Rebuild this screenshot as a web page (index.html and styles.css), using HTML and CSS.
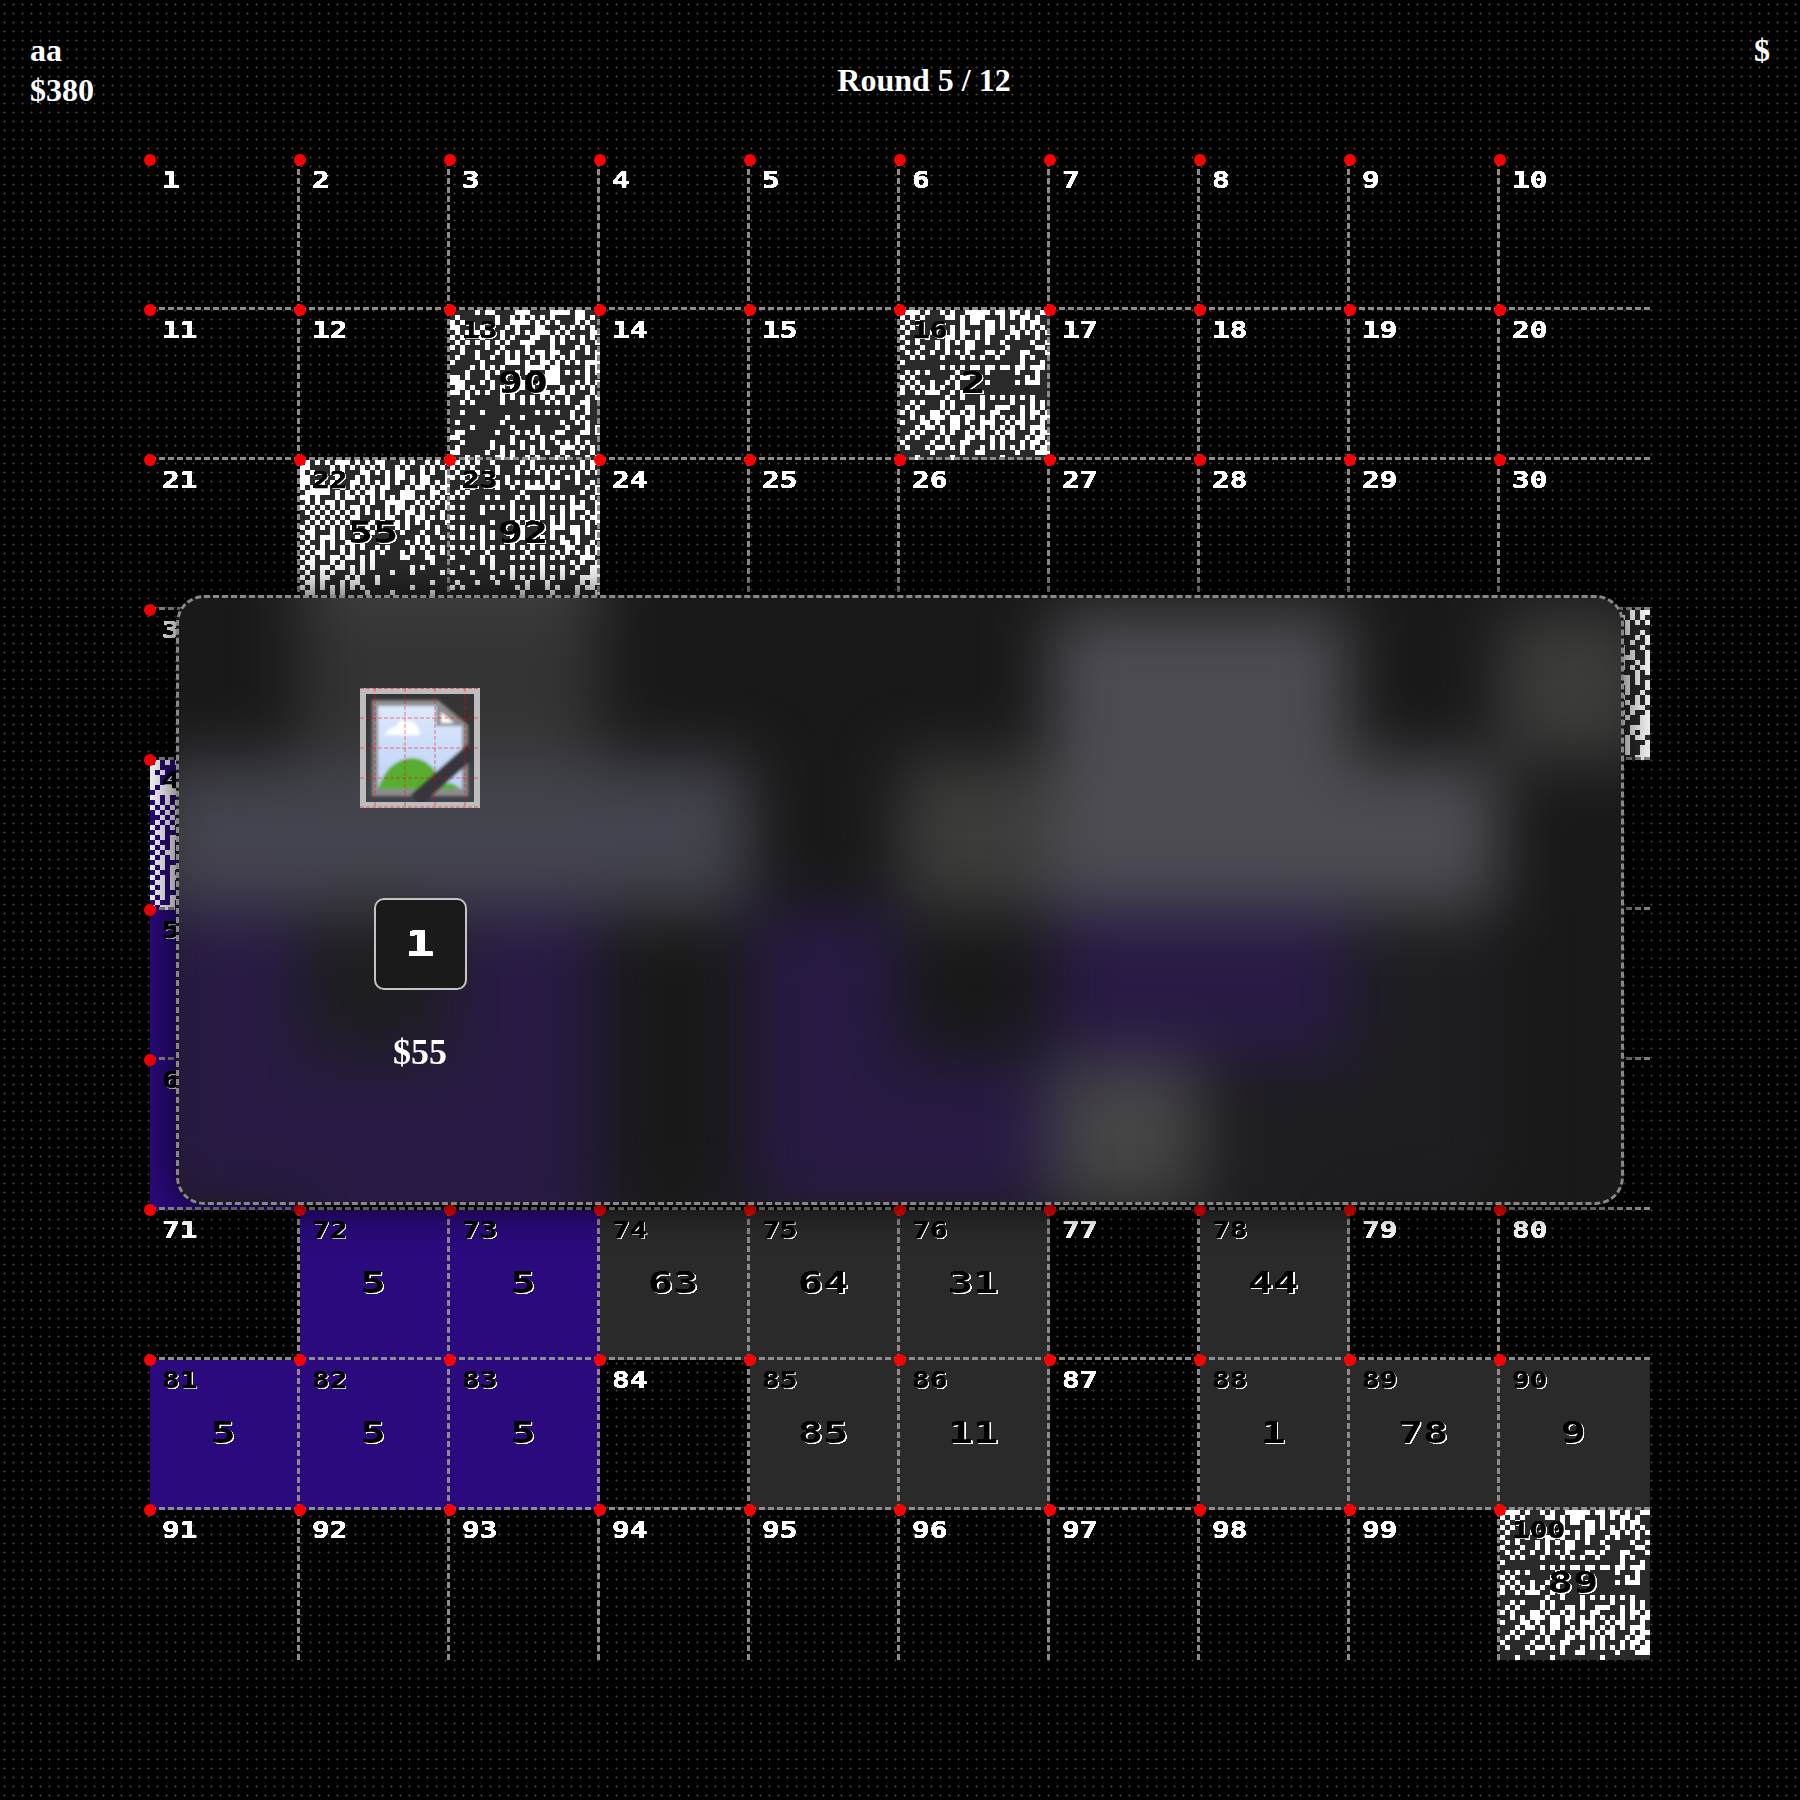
FILE: index.html
```html
<!DOCTYPE html>
<html lang="en">
<head>
<meta charset="utf-8">
<title>Round 5 / 12</title>
<link rel="stylesheet" href="styles.css">
</head>
<body>
<svg class="defs" width="0" height="0" aria-hidden="true"><filter id="crisp" x="-5%" y="-5%" width="110%" height="110%" color-interpolation-filters="sRGB"><feComponentTransfer><feFuncA type="linear" slope="4" intercept="-1.4"/></feComponentTransfer></filter></svg>
<header class="topbar">
  <div class="player"><div>aa</div><div>$380</div></div>
  <div class="round">Round 5 / 12</div>
  <div class="cash">$</div>
</header>
<main class="board">
<div class="cell"><span class="num">1</span></div>
<div class="cell"><span class="num">2</span></div>
<div class="cell"><span class="num">3</span></div>
<div class="cell"><span class="num">4</span></div>
<div class="cell"><span class="num">5</span></div>
<div class="cell"><span class="num">6</span></div>
<div class="cell"><span class="num">7</span></div>
<div class="cell"><span class="num">8</span></div>
<div class="cell"><span class="num">9</span></div>
<div class="cell"><span class="num">10</span></div>
<div class="cell"><span class="num">11</span></div>
<div class="cell"><span class="num">12</span></div>
<div class="cell grey"><canvas class="noise" width="30" height="30" data-art="b"></canvas><span class="num">13</span><span class="val">90</span></div>
<div class="cell"><span class="num">14</span></div>
<div class="cell"><span class="num">15</span></div>
<div class="cell grey"><canvas class="noise" width="30" height="30" data-art="a"></canvas><span class="num">16</span><span class="val">2</span></div>
<div class="cell"><span class="num">17</span></div>
<div class="cell"><span class="num">18</span></div>
<div class="cell"><span class="num">19</span></div>
<div class="cell"><span class="num">20</span></div>
<div class="cell"><span class="num">21</span></div>
<div class="cell grey"><canvas class="noise" width="30" height="30" data-art="c"></canvas><span class="num">22</span><span class="val">55</span></div>
<div class="cell grey"><canvas class="noise" width="30" height="30" data-art="d"></canvas><span class="num">23</span><span class="val">92</span></div>
<div class="cell"><span class="num">24</span></div>
<div class="cell"><span class="num">25</span></div>
<div class="cell"><span class="num">26</span></div>
<div class="cell"><span class="num">27</span></div>
<div class="cell"><span class="num">28</span></div>
<div class="cell"><span class="num">29</span></div>
<div class="cell"><span class="num">30</span></div>
<div class="cell"><span class="num">31</span></div>
<div class="cell"><span class="num">32</span></div>
<div class="cell"><span class="num">33</span></div>
<div class="cell"><span class="num">34</span></div>
<div class="cell"><span class="num">35</span></div>
<div class="cell"><span class="num">36</span></div>
<div class="cell"><span class="num">37</span></div>
<div class="cell"><span class="num">38</span></div>
<div class="cell"><span class="num">39</span></div>
<div class="cell grey"><canvas class="noise" width="30" height="30" data-art="d"></canvas><span class="num">40</span></div>
<div class="cell purple"><canvas class="noise" width="30" height="30" data-art="c"></canvas><span class="num">41</span></div>
<div class="cell"><span class="num">42</span></div>
<div class="cell"><span class="num">43</span></div>
<div class="cell"><span class="num">44</span></div>
<div class="cell"><span class="num">45</span></div>
<div class="cell"><span class="num">46</span></div>
<div class="cell"><span class="num">47</span></div>
<div class="cell"><span class="num">48</span></div>
<div class="cell"><span class="num">49</span></div>
<div class="cell"><span class="num">50</span></div>
<div class="cell purple"><span class="num">51</span></div>
<div class="cell"><span class="num">52</span></div>
<div class="cell"><span class="num">53</span></div>
<div class="cell"><span class="num">54</span></div>
<div class="cell"><span class="num">55</span></div>
<div class="cell"><span class="num">56</span></div>
<div class="cell"><span class="num">57</span></div>
<div class="cell"><span class="num">58</span></div>
<div class="cell"><span class="num">59</span></div>
<div class="cell"><span class="num">60</span></div>
<div class="cell purple"><span class="num">61</span></div>
<div class="cell"><span class="num">62</span></div>
<div class="cell"><span class="num">63</span></div>
<div class="cell"><span class="num">64</span></div>
<div class="cell"><span class="num">65</span></div>
<div class="cell"><span class="num">66</span></div>
<div class="cell"><span class="num">67</span></div>
<div class="cell"><span class="num">68</span></div>
<div class="cell"><span class="num">69</span></div>
<div class="cell"><span class="num">70</span></div>
<div class="cell"><span class="num">71</span></div>
<div class="cell purple"><span class="num">72</span><span class="val">5</span></div>
<div class="cell purple"><span class="num">73</span><span class="val">5</span></div>
<div class="cell grey"><span class="num">74</span><span class="val">63</span></div>
<div class="cell grey"><span class="num">75</span><span class="val">64</span></div>
<div class="cell grey"><span class="num">76</span><span class="val">31</span></div>
<div class="cell"><span class="num">77</span></div>
<div class="cell grey"><span class="num">78</span><span class="val">44</span></div>
<div class="cell"><span class="num">79</span></div>
<div class="cell"><span class="num">80</span></div>
<div class="cell purple"><span class="num">81</span><span class="val">5</span></div>
<div class="cell purple"><span class="num">82</span><span class="val">5</span></div>
<div class="cell purple"><span class="num">83</span><span class="val">5</span></div>
<div class="cell"><span class="num">84</span></div>
<div class="cell grey"><span class="num">85</span><span class="val">85</span></div>
<div class="cell grey"><span class="num">86</span><span class="val">11</span></div>
<div class="cell"><span class="num">87</span></div>
<div class="cell grey"><span class="num">88</span><span class="val">1</span></div>
<div class="cell grey"><span class="num">89</span><span class="val">78</span></div>
<div class="cell grey"><span class="num">90</span><span class="val">9</span></div>
<div class="cell"><span class="num">91</span></div>
<div class="cell"><span class="num">92</span></div>
<div class="cell"><span class="num">93</span></div>
<div class="cell"><span class="num">94</span></div>
<div class="cell"><span class="num">95</span></div>
<div class="cell"><span class="num">96</span></div>
<div class="cell"><span class="num">97</span></div>
<div class="cell"><span class="num">98</span></div>
<div class="cell"><span class="num">99</span></div>
<div class="cell grey"><canvas class="noise" width="30" height="30" data-art="a"></canvas><span class="num">100</span><span class="val">89</span></div>
</main>
<section class="modal">
  <div class="veil" aria-hidden="true">
    <i></i><i class="bright"></i><i class="bright"></i><i></i><i></i><i></i><i></i><i></i><i></i><i></i>
    <i></i><i class="mist"></i><i class="mist"></i><i></i><i></i><i></i><i class="pale"></i><i class="pale"></i><i></i><i class="stone"></i>
    <i class="dusk"></i><i class="dusk"></i><i class="dusk"></i><i class="dusk"></i><i></i><i class="stone"></i><i class="pale"></i><i class="pale"></i><i class="pale"></i><i></i>
    <i class="plum"></i><i class="soot"></i><i class="plum"></i><i></i><i class="plum"></i><i></i><i class="plum"></i><i class="plum"></i><i class="soot"></i><i></i>
    <i class="plum"></i><i class="plum"></i><i class="plum"></i><i></i><i class="plum"></i><i class="plum"></i><i class="ash"></i><i class="soot"></i><i class="soot"></i><i></i>
    <i></i><i class="plum"></i><i class="plum"></i><i class="soot"></i><i class="soot"></i><i class="soot"></i><i></i><i class="soot"></i><i></i><i></i>
  </div>
  <div class="offer">
    <svg class="thumb" viewBox="0 0 120 120" width="120" height="120" aria-hidden="true">
      <defs>
        <filter id="soft" x="-10%" y="-10%" width="120%" height="120%"><feGaussianBlur stdDeviation="1.7"/></filter>
        <linearGradient id="sky" x1="0" y1="0" x2="0" y2="1"><stop offset="0" stop-color="#dde9fb"/><stop offset="1" stop-color="#bcd2f7"/></linearGradient>
      </defs>
      <g filter="url(#soft)">
        <path d="M12 12H78L108 37V108H12Z" fill="#8c8c8c"/>
        <path d="M18 18H76V38H102V101H18Z" fill="url(#sky)"/>
        <path d="M81 24L94 35H81Z" fill="#fff"/>
        <path d="M25 47Q28 39 36 39Q40 29 48 33Q58 33 60 47Z" fill="#fff"/>
        <path d="M18 101Q28 70 54 70Q74 72 84 101Z" fill="#58ad2e"/>
        <path d="M78 101Q90 90 100 101Z" fill="#58ad2e"/>
        <path d="M112 62L56 112" stroke="#34343a" stroke-width="15" fill="none"/>
      </g>
      <rect x="3" y="3" width="114" height="114" fill="none" stroke="#bdbdbd" stroke-width="6"/>
      <path class="mesh" d="M15 0V120M45 0V120M75 0V120M105 0V120M0 .5H120M0 30H120M0 60H120M0 90H120M0 119H120"/>
    </svg>
    <button class="pick" type="button"><span class="pick-num">1</span></button>
    <div class="price">$55</div>
  </div>
</section>
<script src="script.js"></script>
</body>
</html>
```
FILE: styles.css
```css
* { box-sizing: border-box; }
html, body { margin: 0; height: 100%; }
body {
  min-height: 1800px;
  background-color: #000;
  background-image: radial-gradient(circle at 4.5px 4.5px, #454545 0 .6px, #262626 .6px 1.2px, transparent 1.2px);
  background-size: 9px 9px;
  color: #fff;
  font-family: "Liberation Serif", serif;
  font-weight: 700;
  font-size: 32px;
  line-height: 40px;
}
.defs { position: absolute; }
.topbar {
  display: flex;
  justify-content: space-between;
  align-items: flex-start;
  height: 160px;
  padding: 30px;
}
.round { margin-top: 30px; }
.board {
  display: grid;
  grid-template-columns: repeat(10, 150px);
  grid-auto-rows: 150px;
  width: 1500px;
  margin-left: 150px;
}
.cell {
  position: relative;
  display: grid;
  place-items: center;
  padding: 0 3px 3px 0;
}
.cell::before {
  content: "";
  position: absolute;
  left: -6px;
  top: -6px;
  width: 12px;
  height: 12px;
  border-radius: 50%;
  background: #f00;
  z-index: 3;
}
.cell::after {
  content: "";
  position: absolute;
  inset: 0;
  border-right: 3px dashed #8c8c8c;
  border-bottom: 3px dashed #8c8c8c;
  z-index: 2;
}
.cell:nth-child(10n)::after { border-right: 0; }
.cell:nth-child(n+91)::after { border-bottom: 0; }
.grey { background: #2a2a2a; }
.purple { background: #2a0a7c; }
.noise {
  position: absolute;
  left: 0;
  top: 0;
  width: 150px;
  height: 150px;
  image-rendering: pixelated;
}
.num, .val, .pick-num {
  display: inline-block;
  position: relative;
  z-index: 1;
  font-family: "DejaVu Sans Mono", monospace;
  font-weight: 700;
  filter: url(#crisp);
}
.num, .val { grid-area: 1 / 1; }
.num {
  justify-self: start;
  align-self: start;
  margin: 6px 0 0 12px;
  font-size: 23px;
  line-height: 28px;
  transform: scaleX(1.28);
  transform-origin: left center;
  -webkit-text-stroke: .4px currentColor;
}
.val {
  font-size: 30px;
  line-height: 34px;
  margin-top: -2px;
  transform: scaleX(1.4);
}
.grey .num, .grey .val, .purple .num, .purple .val {
  color: #000;
  text-shadow: 1px 1px 0 #fff;
}
.modal {
  position: fixed;
  inset: 595px 176px;
  z-index: 10;
  overflow: hidden;
  padding: 90px 0 0 181px;
  border: 3px dashed #888;
  border-radius: 28px;
  background: #191919;
  box-shadow: 0 0 40px rgba(0, 0, 0, .8);
}
.veil {
  position: absolute;
  left: -29px;
  top: -138px;
  display: grid;
  grid-template-columns: repeat(10, 150px);
  grid-auto-rows: 150px;
  filter: blur(32px);
}
.veil .bright { background: #3e3e3e; }
.veil .mist { background: #343434; }
.veil .pale { background: #4c4c52; }
.veil .stone { background: #3c3c3b; }
.veil .dusk { background: #44444e; }
.veil .plum { background: #281a44; }
.veil .soot { background: #1e1d20; }
.veil .ash { background: #454545; }
.offer {
  position: relative;
  display: flex;
  flex-direction: column;
  align-items: center;
  width: 120px;
}
.thumb { display: block; }
.mesh { fill: none; stroke: rgba(255, 0, 0, .5); stroke-width: 1; stroke-dasharray: 4 2; }
.pick {
  width: 93px;
  height: 92px;
  margin-top: 90px;
  padding: 0;
  border: 2px solid #c4c4c4;
  border-radius: 10px;
  background: #1a1a1a;
  color: #fff;
  font-size: 36px;
  line-height: 40px;
}
.pick-num { transform: scaleX(1.35); -webkit-text-stroke: .5px currentColor; }
.price {
  margin-top: 40px;
  font-size: 36px;
  line-height: 44px;
}
```
FILE: script.js
```js
var ART = {
  a: [
    ".###.##.#.#.#########.##.#..##",
    "#.#.#....##.#.####..#.#.##.#.#",
    ".#.#......#.#.##.##.#.#.#.###.",
    "#.#.......#.#..#.##.#.#.#.#.#.",
    ".##.#.#...#.##.#.##.#.##.#.#.#",
    "#..#.#.#.##.##.#.#...#.#.#.#..",
    ".#.#...#.#.#.##..##.#...#.#..#",
    "#...#..#.#.#.##..#...#.#...###",
    ".#.##.#..#.#.#...##.#.#.##...#",
    "..#.#...#...#.#.#..#.#..#.#...",
    "#.......................#...#.",
    "........#.#.#.##.##.##.##.###.",
    ".#.#.#.....#.....#.....#...#..",
    "#.#.......#.##.........#.#.#..",
    ".#.##.#..#.#.....#....##.###..",
    "#.#.#.#.#..#..................",
    "#.##.####.#.#.................",
    ".#.......#..#...#.#.#.#.#.#...",
    "..#.#.#.#.#.....#.#...#.#.#.#.",
    ".#.#.#..#.#..##.##.###.##.#.##",
    "#.#.#.##.##.#.#.#.##..#.#.####",
    "..#.#.###.##.##.#.#.#.#.#.####",
    "#...##.##.##.##.###.##.##.#.#.",
    ".#.#.##.#.##.##.#.###.#.#.###.",
    "#.#.#...#.#..#.##.##.##.#.#.##",
    ".#.#.#.#.#.#.##.#.#.#.##.#.###",
    "#...#.#..##.##..#.#.#.#.#.####",
    ".#.#.#.##.#.#...#.#.#.#.#.#.##",
    "..#...#.#...#..##...#..#...###",
    "...#......#.........#....#...."
  ],
  b: [
    ".....####...####....#######...",
    ".#.......#..#.#.#.#.#..#.##.#.",
    "#.#......#..####.#.#.#...#.##.",
    "##.#..#.#..#.#.#.##...#.#.#.#.",
    ".#.#.#.##.#..###.###.#.#..#.##",
    "#.#...#...#.#...##..#.#.#.#.#.",
    ".#.#.#.#.#.##.###.#.#.#...#..#",
    "#.#..#.#..#....#.#..#..#.#.#.#",
    "..#.##...#.#.#.#.##.###.#..#.#",
    ".#.#.#..#..#.#..#.#.#.#.#..#.#",
    "#.#...#.#..#####..####.#.#.###",
    "....#.#.#.#....#######...#.#.#",
    "...#...#.#...#.#..####.#.#.#.#",
    "##.#.#.#...#.#.....###.#...#..",
    "###.#.#.#.#.#.#.#..####..#.#.#",
    ".##.#...#.#.#.#.#.#..##.#.#.#.",
    "##.#.#.##.#.#.#...##.##.#...#.",
    ".#.#...#..#.#.#.#.#.#..#.#.#.#",
    "..#.#.....#...#.#..#.#.#..##..",
    "...........#.............#.#.#",
    "..#.#.#..........#.#.#..#..##.",
    "...#.......#..#.........#.#...",
    ".##.......#...#.....#.#..#.#..",
    "....#.......#....#.#...#.#.#.#",
    "###......#...#.#.#...##.#.##.#",
    "##...#......#...#.#.#..#.#...#",
    "..#.....#.#.#.#.#.#..#.#.#.#..",
    ".#.#....#.#...#.#.#...###.#.#.",
    "##.....##.#.#.#.#..##.#..##.#.",
    ".#.#.#.#.##.#..#.#.#.#.#.#.#.#"
  ],
  c: [
    "##.#.#.###.#.#.##.#.#.#.##.#.#",
    "##....#.#.#.#.#.##.#.#.##.#.#.",
    "#.#...#.#.#.##.#.#.##.#.#.#.##",
    "##.....#.#.#.#.#.#.##.#.##.#.#",
    "#####.#.#.##.#.#.#.##.#.##.#.#",
    "######.##.#.#.#.##.#.#.##.#.##",
    "######.#.#.#.##.#.#.###.#.##.#",
    "##.#.#.#.##.#.#.#.#.###.#.#.##",
    ".#.#.##.#.#.#.#.#####.##.#.#.#",
    "#.#.#.#.#.##.#.#.#.####.#.##.#",
    ".#.#.#.#.#.#.#.#.#.#.##.#.#.#.",
    "..#.#.#.#.##.#.#.###.#.##.#.#.",
    ".#.#.#.#.#..#.#.#.##.#.#.#...#",
    "#.#.#.#.#.##.#.#.#.#.#.#.#.#..",
    ".##.#.#.#.#.#.#...#.#.#.#..##.",
    "#.#.###.#..#.........#.#.#.##.",
    ".##.#.#.###.#........#.#.#....",
    "#.#.#.#.#.#.#..#.#.#..#.#.#.#.",
    ".#.##.#.#.#.#.#.#...#.#..#..#.",
    "#.#.#.##.##.#.#.....##...##...",
    ".##.#.#.#.#.#.#.#.........#...",
    "#.#.##.##.#.#.#.......#.#.....",
    ".##.#.#.#.#.#.....#...#.....#.",
    "#.#.##.#.#.#.#.#..............",
    ".##.#.#.#.###..#........#.#...",
    "#.#.#.#.#.#.#.........#.......",
    ".##.#.#.#.#..#..#.#.......#...",
    "#.#####.#.#.#.#.......##.##.##",
    ".##.#.#.####.#.....#..........",
    "#.###.##.#.......#.#.#.#....#."
  ],
  d: [
    ".#.#.#..#.....#.#.#.....#.#.##",
    "#.#.#....#.#.#..#.#.#.#.#.#.#.",
    ".#...#.#.#...#.#.#.#.#...#.#.#",
    "#.#.#..#.#.#...#...#.#.#.#.#..",
    "...#.....#.#.#.#.#.#.#...##.#.",
    "..#.#....#..#..#######...#.#.#",
    ".#.#........#.#.........#.#..#",
    "#.#..#.#.#.#.#.#..#.#.#.#...##",
    "..........#.#...#.#.....#.#.##",
    "#.#...#.#.#.#.#.#.#.#.#.####.#",
    "..#...#.....#.#.#.#.#.#.#.##.#",
    "#.#.........#.#.#.#.#.#.#.#.##",
    "#.......#....#.#.#..#.#.#..#.#",
    "#.#.#.#.......#.....######.#.#",
    "..#.#.#.#.#...#.....#...##.#.#",
    "#.#.#.#.#...#.#...#.#.#..#.#.#",
    "..#...#.....#...#...#.##.#..#.",
    "#.#.#.#.#.#.#.#.#.#.#..###.#.#",
    "...#...#.......#.....#.###.#.#",
    "#.....#.#...#.#.#.#.#.#...####",
    "......#.#.#.......#...#.#.#.##",
    "..#.....#...#.#.#.#.#.#..#.###",
    "#...#.....#.#.....#.#.#.#.#.##",
    "........#...#.#.#.#.#.#..#####",
    ".#...#...#.....#...#....#.#.##",
    "#.#..#.....#.#.#.#.#.#...#.###",
    "..........#...#.#...#.#..#..##",
    ".#.#....#.#.#.#.#.#.#.##.#.###",
    "#.#.#......#.#.#.#.....#.##.##",
    ".....#.#.#.........#.#.#.#.###"
  ]
};

document.querySelectorAll(".noise").forEach(function (canvas) {
  var ctx = canvas.getContext("2d");
  var art = ART[canvas.dataset.art];
  ctx.fillStyle = "#fff";
  art.forEach(function (row, y) {
    row.split("").forEach(function (mark, x) {
      var thinned = (x * 7 + y * 13) % 6 === 0;
      if (mark === "#" && !thinned) ctx.fillRect(x, y, 1, 1);
    });
  });
});
```
